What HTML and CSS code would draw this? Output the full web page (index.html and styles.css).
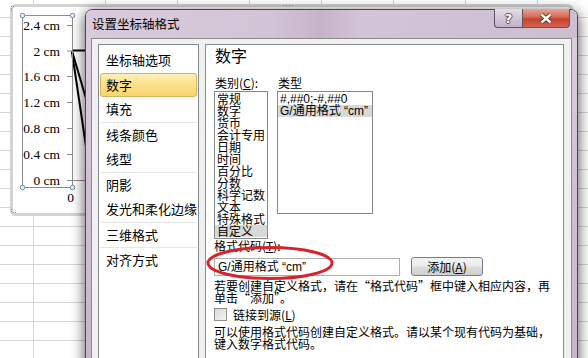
FILE: index.html
```html
<!DOCTYPE html>
<html lang="zh-CN">
  <head>
    <meta charset="UTF-8" />
    <title>设置坐标轴格式</title>
    <link rel="stylesheet" href="styles.css">
  </head>

  <body>
    <div class="sheet">
      <!-- Chart object sitting on the worksheet -->
      <svg class="chart" width="588" height="358" viewBox="0 0 588 358">
        <rect x="11.5" y="5.5" width="560" height="209" rx="4" fill="#fff" stroke="#d3d3d3" stroke-width="3"/>
        <g fill="#8c8c8c">
          <rect x="11" y="6" width="1" height="1"/><rect x="13" y="6" width="1" height="1"/>
          <rect x="11" y="8" width="1" height="1"/><rect x="11" y="10" width="1" height="1"/>
          <rect x="283" y="5" width="1" height="1"/><rect x="286" y="5" width="1" height="1"/>
          <rect x="289" y="5" width="1" height="1"/><rect x="292" y="5" width="1" height="1"/>
          <rect x="11" y="209" width="1" height="1"/><rect x="11" y="211" width="1" height="1"/>
          <rect x="13" y="212" width="1" height="1"/><rect x="15" y="212" width="1" height="1"/>
        </g>

        <!-- chart lines -->
        <g stroke="#000" stroke-width="2" fill="none">
          <line x1="72" y1="50.5" x2="95" y2="50.5"/>
          <line x1="72" y1="51" x2="90" y2="112"/>
          <line x1="72" y1="52" x2="88" y2="160"/>
        </g>
        <line x1="72" y1="180.5" x2="95" y2="180.5" stroke="#8c8c8c"/>

        <!-- plot area selection -->
        <rect x="22.5" y="15.5" width="50" height="172" fill="none" stroke="#8c8c8c"/>
        <g stroke="#8c8c8c">
          <line x1="67" y1="25.5" x2="72" y2="25.5"/>
          <line x1="67" y1="51" x2="72" y2="51"/>
          <line x1="67" y1="76.5" x2="72" y2="76.5"/>
          <line x1="67" y1="102.5" x2="72" y2="102.5"/>
          <line x1="67" y1="128.5" x2="72" y2="128.5"/>
          <line x1="67" y1="154.5" x2="72" y2="154.5"/>
          <line x1="67" y1="180.5" x2="72" y2="180.5"/>
        </g>
        <g class="axis-labels" text-anchor="end">
          <text x="60" y="30">2.4 cm</text>
          <text x="60" y="55.5">2 cm</text>
          <text x="60" y="81">1.6 cm</text>
          <text x="60" y="107">1.2 cm</text>
          <text x="60" y="133">0.8 cm</text>
          <text x="60" y="158.5">0.4 cm</text>
          <text x="60" y="184.5">0 cm</text>
          <text x="74" y="202">0</text>
        </g>
        <g fill="#e3ebf3" stroke="#7890aa">
          <circle cx="22.5" cy="15.5" r="2.3"/>
          <circle cx="72.5" cy="15.5" r="2.3"/>
          <circle cx="22.5" cy="187.5" r="2.3"/>
          <circle cx="72.5" cy="187.5" r="2.3"/>
        </g>
      </svg>

      <!-- Format Axis dialog -->
      <div class="dialog">
        <div class="title-bar">
          <span class="title">设置坐标轴格式</span>
          <div class="caption-buttons">
            <div class="cap-btn help">?</div>
            <div class="cap-btn close">
              <svg width="14" height="11" viewBox="0 0 14 11">
                <path d="M2.5 1.5 L11.5 9.5 M11.5 1.5 L2.5 9.5" stroke="#4a2a2a" stroke-width="4.2"/>
                <path d="M2.5 1.5 L11.5 9.5 M11.5 1.5 L2.5 9.5" stroke="#fff" stroke-width="2.4"/>
              </svg>
            </div>
          </div>
        </div>

        <div class="dialog-body">
          <div class="nav">
            <div class="nav-group">
              <div class="nav-item">坐标轴选项</div>
              <div class="nav-item selected">数字</div>
              <div class="nav-item">填充</div>
            </div>
            <div class="nav-group">
              <div class="nav-item">线条颜色</div>
              <div class="nav-item">线型</div>
            </div>
            <div class="nav-group">
              <div class="nav-item">阴影</div>
              <div class="nav-item">发光和柔化边缘</div>
            </div>
            <div class="nav-group">
              <div class="nav-item">三维格式</div>
            </div>
            <div class="nav-group">
              <div class="nav-item">对齐方式</div>
            </div>
          </div>

          <div class="panel">
            <div class="panel-title">数字</div>
            <div class="lists">
              <div class="list-col">
                <div class="label">类别(<u>C</u>):</div>
                <div class="listbox category">
                  <div class="list-item">常规</div>
                  <div class="list-item">数字</div>
                  <div class="list-item">货币</div>
                  <div class="list-item">会计专用</div>
                  <div class="list-item">日期</div>
                  <div class="list-item">时间</div>
                  <div class="list-item">百分比</div>
                  <div class="list-item">分数</div>
                  <div class="list-item">科学记数</div>
                  <div class="list-item">文本</div>
                  <div class="list-item">特殊格式</div>
                  <div class="list-item selected">自定义</div>
                </div>
              </div>
              <div class="list-col">
                <div class="label">类型</div>
                <div class="listbox types">
                  <div class="list-item">#,##0;-#,##0</div>
                  <div class="list-item selected">G/通用格式 “cm”</div>
                </div>
              </div>
            </div>

            <div class="label code-label">格式代码(<u>T</u>):</div>
            <div class="code-row">
              <div class="code-input">G/通用格式 “cm”</div>
              <div class="btn">添加(<u>A</u>)</div>
            </div>
            <p class="hint">若要创建自定义格式，请在“格式代码”框中键入相应内容，再<br>单击“添加”。</p>
            <div class="check-row">
              <span class="checkbox"></span>
              <span>链接到源(<u>L</u>)</span>
            </div>
            <p class="hint second">可以使用格式代码创建自定义格式。请以某个现有代码为基础，<br>键入数字格式代码。</p>

            <!-- red annotation circle -->
            <svg class="mark" width="132" height="38" viewBox="0 0 132 38">
              <ellipse cx="64" cy="18" rx="62" ry="15.5" fill="none" stroke="#d8232a" stroke-width="3"/>
            </svg>
          </div>
        </div>
      </div>
    </div>
  </body>
</html>
```

FILE: styles.css
```css
body,
html {
  margin: 0;
  padding: 0;
}

/* Worksheet grid */
.sheet {
  position: relative;
  width: 588px;
  height: 358px;
  overflow: hidden;
  background-color: #fff;
  background-image:
    linear-gradient(to right, transparent 71px, #d6d6d6 71px),
    linear-gradient(to bottom, transparent 18px, #d6d6d6 18px);
  background-size: 72px 19px;
  background-position: 34px -1px;
  font-family: "Noto Sans CJK SC", sans-serif;
  color: #000;
}

.chart {
  position: absolute;
  left: 0;
  top: 0;
}

.axis-labels {
  font-family: "Liberation Serif", serif;
  font-size: 13.5px;
  fill: #000;
}

/* Dialog window */
.dialog {
  position: absolute;
  left: 85px;
  top: 9px;
  width: 491px;
  height: 370px;
  border: 1px solid #4c4650;
  border-radius: 7px 7px 0 0;
  background: linear-gradient(to bottom, #dccfde 0%, #d2c2d5 40%, #c7b3ca 100%);
  box-shadow: 0 3px 14px rgba(0, 0, 0, 0.7);
  display: flex;
  flex-direction: column;
}

.title-bar {
  height: 28px;
  display: flex;
  align-items: flex-start;
  background: linear-gradient(90deg, #d8cadb 0%, #d3c3d6 38%, #c6b3c9 48%, #d4c4d7 56%, #cdbdd0 100%);
  border-radius: 6px 6px 0 0;
}

.title {
  padding-left: 6px;
  line-height: 28px;
  font-size: 12.5px;
}

.caption-buttons {
  display: flex;
  margin-left: auto;
  margin-right: 7px;
  margin-top: -1px;
}

.cap-btn {
  height: 18px;
  border: 1px solid #5e5460;
  border-top: none;
  display: flex;
  align-items: center;
  justify-content: center;
}

.help {
  width: 27px;
  border-right: none;
  border-radius: 0 0 0 4px;
  background: linear-gradient(to bottom, #e6dde8, #d3c6d6 50%, #c2b2c6);
  color: #fff;
  font-family: "DejaVu Sans", sans-serif;
  font-weight: bold;
  font-size: 13px;
  text-shadow: -1px 0 #555, 1px 0 #555, 0 -1px #555, 0 1px #555;
}

.close {
  width: 46px;
  border-radius: 0 0 4px 0;
  background: linear-gradient(to bottom, #e8a496, #d56a56 45%, #c7422e 55%, #d26350);
}

.dialog-body {
  flex: 1;
  margin: 0 5px;
  border: 1px solid #8c8c8c;
  border-bottom: none;
  background: #f0f0f0;
  padding: 5px 7px 0 6px;
  display: flex;
  gap: 6px;
  overflow: hidden;
}

/* Left category navigation */
.nav {
  width: 99px;
  border: 1px solid #828790;
  background: #fff;
  padding-top: 3px;
  font-size: 13px;
}

.nav-group + .nav-group {
  border-top: 1px solid #e6e6e6;
  margin: 0 1px;
}

.nav-item {
  height: 24.5px;
  line-height: 24px;
  padding-left: 7px;
  white-space: nowrap;
}

.nav-group + .nav-group .nav-item {
  padding-left: 6px;
}

.nav-item.selected {
  margin: 0 1px 0.5px;
  height: 22px;
  line-height: 22px;
  padding-left: 5px;
  border: 1px solid #d6b15e;
  border-radius: 3px;
  background: linear-gradient(to bottom, #fdf0b8 0%, #fce38e 45%, #f9d46a 100%);
}

/* Right content panel */
.panel {
  position: relative;
  flex: 1;
  border: 1px solid #898c95;
  background: #fff;
  padding: 0 8px;
  font-size: 12px;
}

.panel-title {
  font-size: 16px;
  line-height: 20px;
  margin-top: 0;
  padding-left: 1px;
}

.label {
  line-height: 14px;
}

.lists {
  display: flex;
  gap: 9px;
  margin-top: 11px;
}

.list-col .label {
  padding-left: 1px;
}

.listbox {
  border: 1px solid #828790;
  margin-top: 1px;
  padding-top: 1px;
  overflow: hidden;
}

.category {
  width: 52px;
  height: 145px;
}

.types {
  width: 94px;
  height: 120px;
  padding-top: 1px;
  font-family: "Liberation Sans", "Noto Sans CJK SC", sans-serif;
}

.list-item {
  line-height: 12px;
  height: 12px;
  padding-left: 2px;
  white-space: nowrap;
}

.list-item.selected {
  background: #d9d9d9;
}

.code-label {
  margin-top: 1px;
  line-height: 12px;
}

.code-row {
  display: flex;
  align-items: flex-start;
  margin-top: 5px;
}

.code-input {
  width: 181px;
  height: 16px;
  line-height: 16px;
  border: 1px solid #abadb3;
  padding-left: 3px;
  margin-top: 1px;
  font-family: "Liberation Sans", "Noto Sans CJK SC", sans-serif;
}

.btn {
  margin-left: 11px;
  width: 70px;
  height: 17px;
  line-height: 17px;
  text-align: center;
  border: 1px solid #707c8c;
  border-radius: 3px;
  background: linear-gradient(to bottom, #f4f4f4 0%, #ebebeb 48%, #dddddd 52%, #cfcfcf 100%);
}

.hint {
  margin: 4px 0 0;
  line-height: 11.5px;
  white-space: nowrap;
}

.hint.second {
  margin-top: 5px;
}

.check-row {
  display: flex;
  align-items: center;
  margin-top: 5px;
  height: 13px;
}

.checkbox {
  width: 11px;
  height: 11px;
  border: 1px solid #8e8f8f;
  background: linear-gradient(135deg, #d8d8d8, #f6f6f6);
  margin-right: 6px;
}

.mark {
  position: absolute;
  left: 0;
  top: 200px;
}
```
